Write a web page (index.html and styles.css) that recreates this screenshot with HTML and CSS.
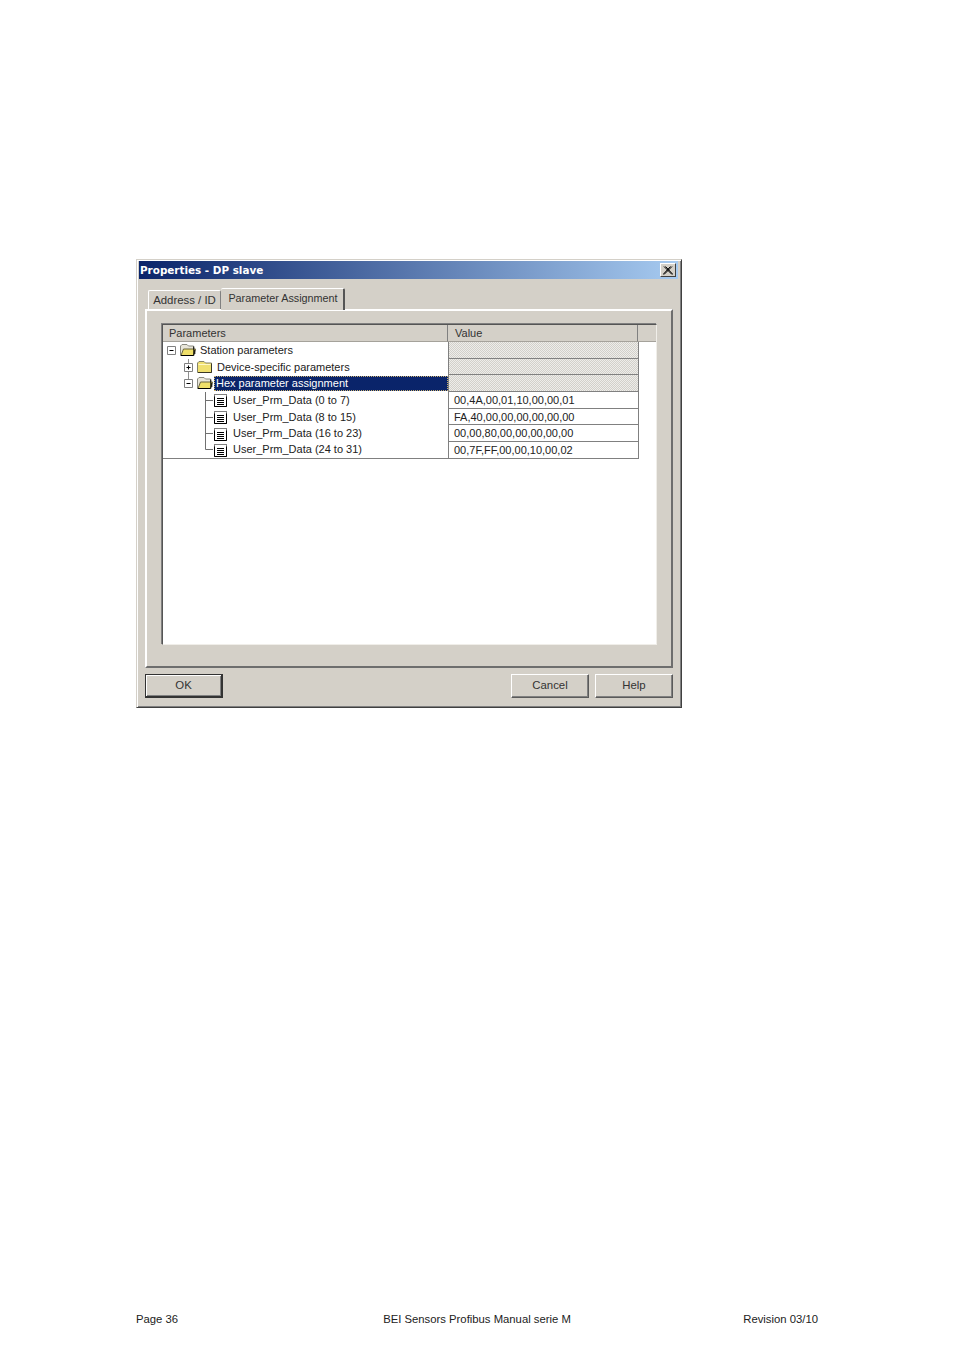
FILE: index.html
```html
<!DOCTYPE html>
<html lang="en">

<head>
  <meta charset="UTF-8">
  <title>Properties - DP slave</title>
  <link rel="stylesheet" href="styles.css">
</head>

<body>
  <svg class="defs" width="0" height="0">
    <symbol id="folderOpen" viewBox="0 0 17 14">
      <path d="M1.500 12.500V3L3 1.500H8L9.500 3H14.500V12.500Z" fill="#e9e6da" stroke="#8a8a80"/>
      <path d="M2 12.500L4.500 6H16.500L14.500 12.500Z" fill="#efdf6a" stroke="#6a6640"/>
      <path d="M14.500 12.500H2" stroke="#000000"/>
      <path d="M14.800 3.500V12.500M15.800 7V11" stroke="#000000"/>
    </symbol>
    <symbol id="folderClosed" viewBox="0 0 17 14">
      <path d="M1.500 12.500V3L3 1.500H8L9.500 3H15.500V12.500Z" fill="#f0e070" stroke="#85836a"/>
      <path d="M2.500 4.500H14.500" stroke="#fff8c8"/>
      <path d="M15.500 3.500V12.500H2" fill="none" stroke="#3a3826"/>
    </symbol>
    <symbol id="doc" viewBox="0 0 14 14">
      <path d="M0.500 1.500H12.500V13.500H0.500Z" fill="#ffffff" stroke="#000000" stroke-dasharray="1 1"/>
      <path d="M0.500 3.500V13.500H12.500V3.500" fill="none" stroke="#000000"/>
      <path d="M3 5.500H10M3 7.500H10M3 9.500H10M3 11.500H10" stroke="#000000"/>
    </symbol>
  </svg>

  <div class="page">
    <div class="dialog">
      <div class="titleBar">
        <span>Properties - DP slave</span>
        <button class="closeButton">
          <svg width="10" height="9" viewBox="0 0 10 9">
            <path d="M1 0.500L9 8.500M2.500 0.500L10 8.500M9 0.500L1 8.500M7.500 0.500L0 8.500" stroke="#000000" fill="none"/>
          </svg>
        </button>
      </div>

      <div class="tabs">
        <div class="tab">Address / ID</div>
        <div class="tab activeTab">Parameter Assignment</div>
      </div>

      <div class="tabPanel">
        <div class="listBox">
          <div class="listHeader">
            <div class="headCell firstHead">Parameters</div>
            <div class="headCell valueHead">Value</div>
            <div class="headCell restHead"></div>
          </div>

          <div class="row">
            <div class="treeCell">
              <svg class="guides" width="17" height="17" viewBox="0 0 17 17">
                <path d="M4.500 4.500H12.500V12.500H4.500Z" fill="#ffffff" stroke="#808080"/>
                <path d="M6.500 8.500H10.500" stroke="#000000"/>
              </svg>
              <svg class="folder" width="17" height="14"><use href="#folderOpen"/></svg>
              <span class="label">Station parameters</span>
            </div>
            <div class="valueCell locked"></div>
          </div>

          <div class="row">
            <div class="treeCell">
              <svg class="guides level1" width="17" height="17" viewBox="0 0 17 17">
                <path d="M8.500 0V17" stroke="#909090"/>
                <path d="M4.500 4.500H12.500V12.500H4.500Z" fill="#ffffff" stroke="#808080"/>
                <path d="M6.500 8.500H10.500M8.500 6.500V10.500" stroke="#000000"/>
              </svg>
              <svg class="folder" width="17" height="14"><use href="#folderClosed"/></svg>
              <span class="label">Device-specific parameters</span>
            </div>
            <div class="valueCell locked"></div>
          </div>

          <div class="row">
            <div class="treeCell">
              <svg class="guides level1" width="17" height="17" viewBox="0 0 17 17">
                <path d="M8.500 0V5" stroke="#909090"/>
                <path d="M4.500 4.500H12.500V12.500H4.500Z" fill="#ffffff" stroke="#808080"/>
                <path d="M6.500 8.500H10.500" stroke="#000000"/>
              </svg>
              <svg class="folder" width="17" height="14"><use href="#folderOpen"/></svg>
              <span class="label selected">Hex parameter assignment</span>
            </div>
            <div class="valueCell locked"></div>
          </div>

          <div class="row">
            <div class="treeCell">
              <svg class="guides level2" width="17" height="17" viewBox="0 0 17 17">
                <path d="M8.500 0V17M8.500 8.500H16" stroke="#707070"/>
              </svg>
              <svg class="docIcon" width="14" height="14"><use href="#doc"/></svg>
              <span class="label">User_Prm_Data (0 to 7)</span>
            </div>
            <div class="valueCell">00,4A,00,01,10,00,00,01</div>
          </div>

          <div class="row">
            <div class="treeCell">
              <svg class="guides level2" width="17" height="17" viewBox="0 0 17 17">
                <path d="M8.500 0V17M8.500 8.500H16" stroke="#707070"/>
              </svg>
              <svg class="docIcon" width="14" height="14"><use href="#doc"/></svg>
              <span class="label">User_Prm_Data (8 to 15)</span>
            </div>
            <div class="valueCell">FA,40,00,00,00,00,00,00</div>
          </div>

          <div class="row">
            <div class="treeCell">
              <svg class="guides level2" width="17" height="17" viewBox="0 0 17 17">
                <path d="M8.500 0V17M8.500 8.500H16" stroke="#707070"/>
              </svg>
              <svg class="docIcon" width="14" height="14"><use href="#doc"/></svg>
              <span class="label">User_Prm_Data (16 to 23)</span>
            </div>
            <div class="valueCell">00,00,80,00,00,00,00,00</div>
          </div>

          <div class="row lastRow">
            <div class="treeCell">
              <svg class="guides level2" width="17" height="17" viewBox="0 0 17 17">
                <path d="M8.500 0V8.500H16" stroke="#707070" fill="none"/>
              </svg>
              <svg class="docIcon" width="14" height="14"><use href="#doc"/></svg>
              <span class="label">User_Prm_Data (24 to 31)</span>
            </div>
            <div class="valueCell">00,7F,FF,00,00,10,00,02</div>
          </div>
        </div>
      </div>

      <div class="buttonBar">
        <button class="dlgButton defaultButton">OK</button>
        <div class="rightButtons">
          <button class="dlgButton">Cancel</button>
          <button class="dlgButton">Help</button>
        </div>
      </div>
    </div>

    <div class="pageFooter">
      <span>Page 36</span>
      <span>BEI Sensors Profibus Manual serie M</span>
      <span class="footerRight">Revision 03/10</span>
    </div>
  </div>
</body>

</html>
```

FILE: styles.css
```css
body {
  margin: 0;
  background: #fff;
  font-family: "Liberation Sans", Arial, sans-serif;
  color: #222;
}

.defs {
  position: absolute;
}

.page {
  height: 1350px;
  box-sizing: border-box;
  padding: 259px 136px 24px 136px;
  display: flex;
  flex-direction: column;
  justify-content: space-between;
  overflow: hidden;
}

.dialog {
  width: 546px;
  height: 449px;
  box-sizing: border-box;
  background: #d4d0c8;
  border: 1px solid;
  border-color: #d4d0c8 #404040 #404040 #d4d0c8;
  box-shadow: inset 1px 1px 0 #fff, inset -1px -1px 0 #808080;
  padding: 1px 3px 0 2px;
  font-size: 11px;
}

.titleBar {
  height: 18px;
  background: linear-gradient(to right, #0a246a, #a6caf0);
  color: #fff;
  font-family: "DejaVu Sans", Verdana, sans-serif;
  font-weight: bold;
  font-size: 10.4px;
  display: flex;
  align-items: center;
  justify-content: space-between;
  padding: 0 2px 0 1px;
}

.closeButton {
  width: 16px;
  height: 14px;
  padding: 0;
  background: #d4d0c8;
  border: 1px solid;
  border-color: #fff #404040 #404040 #fff;
  display: flex;
  align-items: center;
  justify-content: center;
}

.tabs {
  display: flex;
  align-items: flex-end;
  height: 30px;
  padding-left: 9px;
}

.tab {
  width: 73px;
  box-sizing: border-box;
  height: 19px;
  line-height: 18px;
  text-align: center;
  font-size: 11.4px;
  background: #d4d0c8;
  color: #333;
  border: 1px solid #fff;
  border-bottom: none;
  border-right: 1px solid #808080;
  border-radius: 2px 2px 0 0;
}

.activeTab {
  width: 124px;
  height: 22px;
  line-height: 18px;
  font-size: 10.8px;
  padding-left: 2px;
  margin-bottom: -1px;
  border-left: none;
  border-right: 2px solid #555;
  position: relative;
}

.tabPanel {
  width: 528px;
  height: 359px;
  box-sizing: border-box;
  margin-left: 6px;
  border: 2px solid;
  border-color: #fff #6e6e6e #6e6e6e #fff;
  padding: 13px 14px 21px 15px;
}

.listBox {
  height: 100%;
  box-sizing: border-box;
  background: #fff;
  border: 1px solid;
  border-color: #555 #f0eee9 #f0eee9 #555;
  box-shadow: -1px -1px 0 #808080;
}

.listHeader {
  display: flex;
  height: 17px;
  background: #d4d0c8;
  color: #333;
}

.headCell {
  box-sizing: border-box;
  height: 17px;
  line-height: 17px;
  padding-left: 6px;
  font-size: 11px;
  border-right: 1px solid #808080;
  border-bottom: 1px solid #a5a29b;
}

.firstHead {
  width: 285px;
}

.valueHead {
  width: 190px;
  padding-left: 7px;
}

.restHead {
  flex: 1;
  border-right: none;
  padding: 0;
}

.row {
  display: flex;
  height: 16.7px;
}

.treeCell {
  width: 285px;
  display: flex;
  align-items: center;
  flex-shrink: 0;
}

.lastRow .treeCell {
  border-bottom: 1px solid #808080;
  box-sizing: border-box;
}

.guides,
.folder,
.docIcon {
  flex-shrink: 0;
}

.folder {
  margin: -1px 1px 0 -1px;
}

.level1 {
  margin-left: 17px;
}

.level2 {
  margin-left: 34px;
}

.docIcon {
  margin-right: 2px;
}

.label {
  margin-left: 2px;
  padding: 0 1px;
  line-height: 16px;
  white-space: nowrap;
  position: relative;
  top: -0.5px;
}

.selected {
  flex: 1;
  top: 0;
  margin-left: 0;
  padding: 0 2px;
  line-height: 15px;
  background: #0a246a;
  color: #fff;
  outline: 1px dotted #c9b070;
  outline-offset: -1px;
}

.valueCell {
  box-sizing: border-box;
  width: 191px;
  padding-left: 5px;
  line-height: 16px;
  border: 1px solid #808080;
  border-top: none;
}

.locked {
  background: repeating-conic-gradient(#d2d0ca 0% 25%, #eeedea 0% 50%) 0 0 / 2px 2px;
}

.buttonBar {
  display: flex;
  justify-content: space-between;
  margin: 6px 5px 0 6px;
  width: 528px;
}

.rightButtons {
  display: flex;
  gap: 6px;
}

.dlgButton {
  width: 78px;
  height: 24px;
  padding: 0 0 2px 0;
  background: #d4d0c8;
  color: #333;
  font-family: inherit;
  font-size: 11.4px;
  border: 1px solid;
  border-color: #fff #5a5a5a #5a5a5a #fff;
  box-shadow: inset -1px -1px 0 #808080;
}

.defaultButton {
  border: 2px solid #333;
  border-top-width: 1px;
  border-left-width: 1px;
  box-shadow: inset 1px 1px 0 #fff, inset -1px -1px 0 #808080;
}

.pageFooter {
  width: 682px;
  display: grid;
  grid-template-columns: 1fr auto 1fr;
  font-size: 11.3px;
  line-height: 13px;
  color: #222;
}

.footerRight {
  text-align: right;
}
```
